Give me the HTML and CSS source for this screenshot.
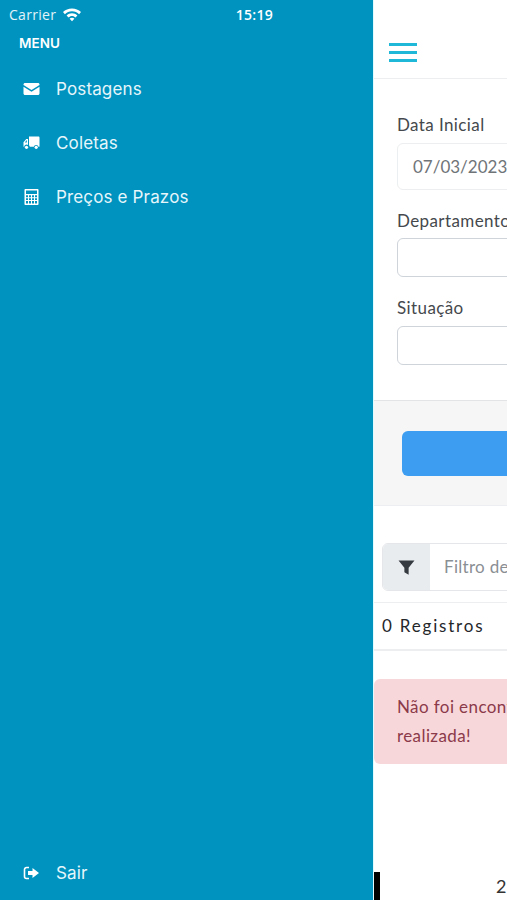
FILE: index.html

```html
<!DOCTYPE html>
<html>
<head>
  <title>Postagens</title>
  <link rel="stylesheet" href="styles.css">
</head>
<body>
  <div class="app">
    <aside class="sidebar">
      <div class="statusbar">
        <span class="carrier">Carrier</span>
        <svg class="wifi" viewBox="0 0 20 15" width="20" height="15">
          <path d="M10 1.500C6.500 1.500 3.300 2.800 1 5.100L2.900 7.200C4.700 5.400 7.200 4.300 10 4.300S15.300 5.400 17.100 7.200L19 5.100C16.700 2.800 13.500 1.500 10 1.500Z" fill="#fff"/>
          <path d="M10 6.200C7.900 6.200 6 7 4.600 8.400L6.500 10.500C7.400 9.600 8.600 9 10 9S12.600 9.600 13.500 10.500L15.400 8.400C14 7 12.100 6.200 10 6.200Z" fill="#fff"/>
          <path d="M10 10.700C9 10.700 8.200 11.100 7.600 11.700L10 14.300L12.400 11.700C11.800 11.100 11 10.700 10 10.700Z" fill="#fff"/>
        </svg>
        <span class="clock">15:19</span>
      </div>
      <div class="menu-title">MENU</div>
      <nav class="menu">
        <a class="menu-item">
          <svg class="menu-icon" viewBox="0 0 16 14" width="16" height="14">
            <path d="M0 2.500C0 1.700.7 1 1.500 1H14.500C15.300 1 16 1.700 16 2.500V3L8 8 0 3Z" fill="#fff"/>
            <path d="M0 4.800L8 9.800 16 4.800V11.500C16 12.300 15.300 13 14.500 13H1.500C.7 13 0 12.300 0 11.500Z" fill="#fff"/>
          </svg>
          <span>Postagens</span>
        </a>
        <a class="menu-item">
          <svg class="menu-icon" viewBox="0 0 16 14" width="16" height="14">
            <path d="M5.500 .5H15C15.500 .5 16 1 16 1.500V10.800H15A2.400 2.400 0 0 0 10.300 10.800H6.300A2.400 2.400 0 0 0 5.500 9.300Z" fill="#fff"/>
            <path d="M4.500 3H2.800L0 6.200V10.800H.7A2.400 2.400 0 0 1 4.500 9.100ZM3.300 4.300V6.600H1.400L3 4.300Z" fill="#fff" fill-rule="evenodd"/>
            <circle cx="3" cy="11.300" r="1.600" fill="#fff"/>
            <circle cx="12.700" cy="11.300" r="1.600" fill="#fff"/>
          </svg>
          <span>Coletas</span>
        </a>
        <a class="menu-item">
          <svg class="menu-icon" viewBox="0 0 16 16" width="16" height="16">
            <path fill-rule="evenodd" fill="#fff" d="M2 0H14C14.600 0 15 .4 15 1V15C15 15.600 14.600 16 14 16H2C1.400 16 1 15.600 1 15V1C1 .4 1.400 0 2 0ZM2.500 1.500V5H13.500V1.500ZM2.500 6.300V8.200H4.500V6.300ZM5.500 6.300V8.200H7.500V6.300ZM8.500 6.300V8.200H10.500V6.300ZM11.500 6.300V8.200H13.500V6.300ZM2.500 9.200V11.100H4.500V9.200ZM5.500 9.200V11.100H7.500V9.200ZM8.500 9.200V11.100H10.500V9.200ZM11.500 9.200V11.100H13.500V9.200ZM2.500 12.100V14.500H4.500V12.100ZM5.500 12.100V14.500H7.500V12.100ZM8.500 12.100V14.500H10.500V12.100ZM11.500 12.100V14.500H13.500V12.100Z"/>
          </svg>
          <span>Preços e Prazos</span>
        </a>
      </nav>
      <a class="menu-item">
        <svg class="menu-icon" viewBox="0 0 16 14" width="16" height="14">
          <path d="M5.500 1.500H3A2 2 0 0 0 1 3.500V10.500A2 2 0 0 0 3 12.500H5.500" fill="none" stroke="#fff" stroke-width="1.600"/>
          <path d="M4.500 5H9V2L15.500 7 9 12V9H4.500Z" fill="#fff"/>
        </svg>
        <span>Sair</span>
      </a>
    </aside>

    <main class="content">
      <div class="inner">
        <header class="topbar">
          <div class="burger"><i></i><i></i><i></i></div>
        </header>
        <section class="form">
          <label class="field-label">Data Inicial</label>
          <div class="input input-date">07/03/2023</div>
          <label class="field-label label-dept">Departamento</label>
          <div class="input input-dept"></div>
          <label class="field-label">Situação</label>
          <div class="input"></div>
        </section>
        <section class="actions">
          <button class="btn-primary"></button>
        </section>
        <div class="filter">
          <span class="filter-addon">
            <svg viewBox="0 0 16 16" width="17" height="17">
              <path d="M.5 1.500H15.500L10 8.200V14.800L6 12.400V8.200Z" fill="#343a40"/>
            </svg>
          </span>
          <span class="filter-text">Filtro de resultados</span>
        </div>
        <div class="count">0 Registros</div>
        <div class="alert">Não foi encontrado registro na pesquisa realizada!</div>
        <footer class="page-foot">
          <span class="foot-mark"></span>
          <span class="foot-text">2023</span>
        </footer>
      </div>
    </main>
  </div>
</body>
</html>
```

FILE: styles.css

```css
html, body {
  margin: 0;
  height: 100%;
}
body {
  font-family: "Open Sans", Arial, sans-serif;
  overflow: hidden;
}
.app {
  display: flex;
  width: 507px;
  height: 900px;
  overflow: hidden;
}
.sidebar {
  --sidebar-bg: #0093bf;

  flex: 0 0 373px;
  display: flex;
  flex-direction: column;
  background-color: var(--sidebar-bg);
  color: #fff;
}
.statusbar {
  display: flex;
  align-items: center;
  height: 28px;
  padding: 0 100px 0 9px;
  font-size: 14px;
}
.carrier {
  margin-right: 6px;
  letter-spacing: .3px;
  color: #e3f4f9;
}
.clock {
  margin-left: auto;
  font-weight: 600;
  letter-spacing: .3px;
}
.menu-title {
  padding: 6px 0 0 19px;
  font-family: Inter, sans-serif;
  font-size: 13.500px;
  font-weight: 600;
  line-height: 18px;
}
.menu {
  flex: 1;
  padding-top: 10px;
}
.menu-item {
  display: flex;
  align-items: center;
  height: 54px;
  padding-left: 23px;
  font-family: Inter, sans-serif;
  font-size: 17px;
  letter-spacing: .15px;
  color: #e6f6fb;
}
.menu-icon {
  width: 17px;
  margin-right: 16px;
}
.content {
  flex: 1;
  min-width: 0;
  overflow: hidden;
  border-left: 1px solid #dffbff;
  background-color: #fff;
}
.inner {
  width: 375px;
  height: 900px;
  display: flex;
  flex-direction: column;
}
.topbar {
  height: 79px;
  flex: none;
  box-sizing: border-box;
  display: flex;
  align-items: center;
  padding: 27px 0 0 15px;
  border-bottom: 1px solid #eceeef;
}
.burger {
  display: flex;
  flex-direction: column;
  gap: 5px;
  width: 28px;
}
.burger i {
  display: block;
  height: 3px;
  background-color: #1fb8d8;
}
.form {
  height: 321px;
  flex: none;
  box-sizing: border-box;
  padding: 35px 0 0 23px;
}
.field-label {
  display: block;
  font-family: Lato, sans-serif;
  font-size: 17px;
  letter-spacing: .4px;
  line-height: 22px;
  color: #45494d;
  margin-bottom: 7px;
}
.label-dept {
  margin-bottom: 6px;
}
.input {
  width: 320px;
  height: 39px;
  box-sizing: border-box;
  margin-bottom: 21px;
  border: 1px solid #ced4da;
  border-radius: 6px;
  background-color: #fff;
}
.input-date {
  height: 47px;
  margin-bottom: 20px;
  padding-left: 15px;
  line-height: 45px;
  font-family: Lato, sans-serif;
  font-size: 17px;
  color: #6f7478;
  border-color: #eceeef;
}
.input-dept {
  margin-bottom: 20px;
}
.actions {
  height: 106px;
  flex: none;
  box-sizing: border-box;
  padding: 30px 0 0 28px;
  background-color: #f6f6f7;
  border-top: 1px solid #e3e4e6;
  border-bottom: 1px solid #eceef2;
}
.btn-primary {
  display: block;
  width: 320px;
  height: 45px;
  border: none;
  border-radius: 6px;
  background-color: #3c9df1;
}
.filter {
  display: flex;
  flex: none;
  height: 48px;
  margin: 37px 0 0 8px;
  box-sizing: border-box;
  border: 1px solid #e4e6e9;
  border-radius: 6px;
  width: 360px;
}
.filter-addon {
  display: flex;
  align-items: center;
  justify-content: center;
  width: 47px;
  background-color: #e9ecef;
  border-radius: 5px 0 0 5px;
}
.filter-text {
  padding-left: 14px;
  line-height: 46px;
  font-family: Lato, sans-serif;
  font-size: 17px;
  letter-spacing: .3px;
  color: #8a8f94;
  white-space: nowrap;
}
.count {
  flex: none;
  height: 49px;
  box-sizing: border-box;
  margin-top: 11px;
  padding-left: 8px;
  border-top: 1px solid #eceef0;
  border-bottom: 2px solid #eceef0;
  font-family: Lato, sans-serif;
  font-size: 17px;
  letter-spacing: 1.800px;
  line-height: 46px;
  color: #24272a;
}
.alert {
  flex: none;
  height: 85px;
  box-sizing: border-box;
  margin-top: 28px;
  padding: 13px 23px;
  border-radius: 6px;
  background-color: #f8d7da;
  font-family: Lato, sans-serif;
  font-size: 17px;
  letter-spacing: .4px;
  line-height: 29px;
  color: #8b3a4a;
}
.page-foot {
  flex: 1;
  display: flex;
  align-items: flex-end;
  gap: 116px;
}
.foot-mark {
  width: 6px;
  height: 28px;
  background-color: #000;
}
.foot-text {
  font-family: Lato, sans-serif;
  font-size: 18px;
  letter-spacing: 1px;
  line-height: 28px;
  color: #333;
}
```
